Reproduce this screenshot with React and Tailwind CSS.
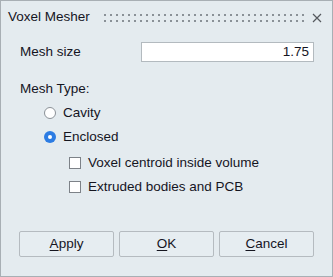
export default function App() {
    const font = { fontFamily: '"Liberation Sans", Arial, sans-serif' };
    const dots = [];
    for (let i = 0; i < 34; i++) {
        dots.push(<rect key={'a' + i} x={i * 6} y={0} width="2" height="2" />);
        dots.push(<rect key={'b' + i} x={i * 6} y={6} width="2" height="2" />);
    }

    return (
        <div style={font} className="w-[333px] h-[277px] flex flex-col bg-[#e4ebef] border border-[#a8afb4] text-[13.5px] leading-[16px] text-[#15151f]">
            {/* Barre de titre */}
            <div className="h-[32px] flex items-center pl-[7px]">
                <span className="w-[96px]">Voxel Mesher</span>
                <svg width="200" height="8" className="fill-[#8a9197] mt-[1px]">{dots}</svg>
                <svg width="10" height="10" viewBox="0 0 10 10" className="ml-[8px] mt-[1px]">
                    <path d="M1 1 L9 9 M9 1 L1 9" stroke="#55595e" strokeWidth="1.2" fill="none" />
                </svg>
            </div>

            <div className="flex flex-col flex-1 pl-[19px]">
                <div className="flex items-center mt-[9px]">
                    <span className="w-[121px]">Mesh size</span>
                    <div className="w-[173px] h-[20px] bg-white border border-[#b3babf] flex items-center justify-end pr-[4px]">1.75</div>
                </div>

                <div className="mt-[19px]">Mesh Type:</div>

                <div className="mt-[4px] h-[24px] flex items-center ml-[24px] gap-[7px]">
                    <span className="w-[12px] h-[12px] rounded-full bg-white border border-[#8b9197]"></span>
                    <span>Cavity</span>
                </div>
                <div className="h-[24px] flex items-center ml-[24px] gap-[7px]">
                    <span className="w-[12px] h-[12px] rounded-full bg-[#2c7ce3] flex items-center justify-center">
                        <span className="w-[4px] h-[4px] rounded-full bg-white"></span>
                    </span>
                    <span>Enclosed</span>
                </div>

                <div className="mt-[2px] h-[24px] flex items-center ml-[49px] gap-[7px]">
                    <span className="w-[12px] h-[12px] bg-white border border-[#7d8288]"></span>
                    <span>Voxel centroid inside volume</span>
                </div>
                <div className="h-[24px] flex items-center ml-[49px] gap-[7px]">
                    <span className="w-[12px] h-[12px] bg-white border border-[#7d8288]"></span>
                    <span>Extruded bodies and PCB</span>
                </div>

                <div className="mt-auto mb-[19px] -ml-[1px] flex gap-[5px]">
                    <button className="w-[95px] h-[26px] border border-[#b5bbc0] rounded-[2px] bg-[#e6edf1]"><span className="underline underline-offset-2">A</span>pply</button>
                    <button className="w-[95px] h-[26px] border border-[#b5bbc0] rounded-[2px] bg-[#e6edf1]"><span className="underline underline-offset-2">O</span>K</button>
                    <button className="w-[95px] h-[26px] border border-[#b5bbc0] rounded-[2px] bg-[#e6edf1]"><span className="underline underline-offset-2">C</span>ancel</button>
                </div>
            </div>
        </div>
    );
}
